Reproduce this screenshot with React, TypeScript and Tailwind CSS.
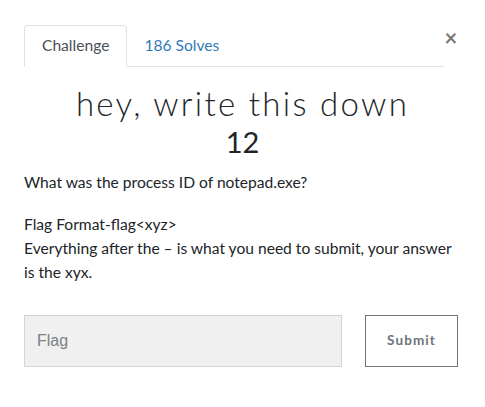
import React from 'react';

const App = () => {
  return (
    <div className="min-h-screen bg-white px-6 pt-[25px] font-['Lato','Noto_Sans',sans-serif] text-[#212529]">
      {/* Header: tabs + close */}
      <div className="flex items-start">
        <nav className="flex w-[420px] shrink-0 border-b border-[#dee2e6]">
          <button className="-mb-px h-[42px] rounded-t border border-[#dee2e6] border-b-white bg-white px-[17px] text-[15.6px] text-[#495057]">
            Challenge
          </button>
          <button className="h-[41px] px-[17px] text-[15.6px] text-[#337ab7]">186 Solves</button>
        </nav>
        <button className="mt-[2px] w-[14px] text-center text-[22px] leading-none font-bold text-[#777]">×</button>
      </div>

      {/* Title */}
      <h3 className="mt-[16px] text-center text-[33px] leading-tight font-light tracking-[0.07em] text-[#212529]">
        hey, write this down
      </h3>
      <h4 className="mt-0 text-center text-[29px] leading-tight text-[#212529]">12</h4>

      {/* Description */}
      <div className="mt-[9px] text-[15.6px] leading-6 text-[#212529]">
        <p>What was the process ID of notepad.exe?</p>
        <p className="mt-[18px]">
          Flag Format-flag&lt;xyz&gt;
          <br />
          Everything after the – is what you need to submit, your answer is the xyx.
        </p>
      </div>

      {/* Submission */}
      <div className="mt-[31px] flex items-start gap-[23px]">
        <input
          placeholder="Flag"
          className="box-border h-[52px] w-[318px] border border-[#ced4da] bg-[#f0f0f0] px-3 font-['Liberation_Sans',Arial,sans-serif] text-[16px] text-[#495057] placeholder:text-[#7d8185] outline-none"
        />
        <button className="box-border h-[52px] w-[93px] border border-[#6c757d] bg-white text-[13.5px] font-bold tracking-[0.08em] text-[#6c757d]">
          Submit
        </button>
      </div>
    </div>
  );
};

export default App;
